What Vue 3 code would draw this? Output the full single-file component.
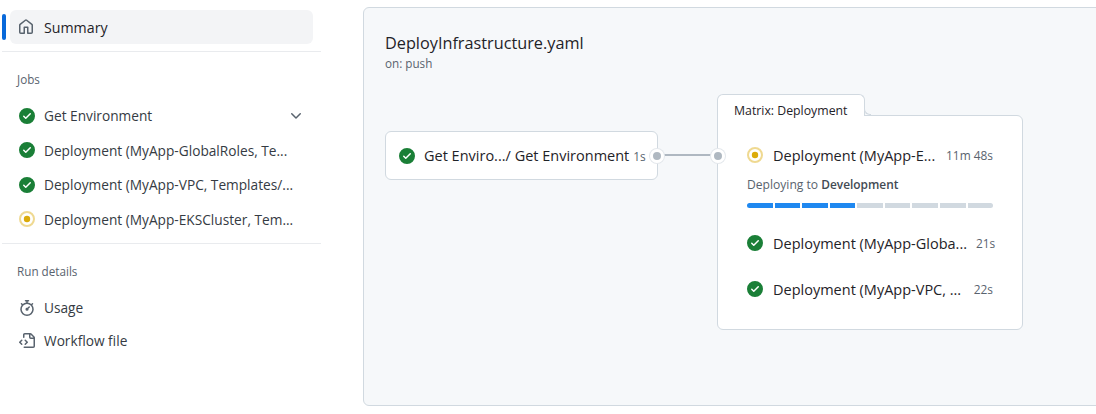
<template>
  <div class="page">
    <aside class="sidebar">
      <div class="summary-wrap">
        <span class="active-bar"></span>
        <a class="nav-item summary">
          <svg class="icon muted" viewBox="0 0 16 16"><path :d="icons.home" /></svg>
          <span class="label">Summary</span>
        </a>
      </div>
      <div class="section">
        <h2 class="section-title">Jobs</h2>
        <a v-for="job in sidebarJobs" :key="job.name" class="nav-item job">
          <svg v-if="job.status === 'success'" class="icon green" viewBox="0 0 16 16"><path :d="icons.check" /></svg>
          <svg v-else class="icon" viewBox="0 0 16 16">
            <circle cx="8" cy="8" r="7" fill="none" stroke="#dbab0a" stroke-opacity=".45" stroke-width="2" />
            <circle cx="8" cy="8" r="3.2" fill="#dbab0a" />
          </svg>
          <span class="label">{{ job.name }}</span>
          <svg v-if="job.expandable" class="icon chevron muted" viewBox="0 0 16 16"><path :d="icons.chevron" /></svg>
        </a>
      </div>
      <div class="section details">
        <h2 class="section-title">Run details</h2>
        <a class="nav-item job">
          <svg class="icon muted" viewBox="0 0 16 16"><path :d="icons.stopwatch" /></svg>
          <span class="label">Usage</span>
        </a>
        <a class="nav-item job">
          <svg class="icon muted" viewBox="0 0 16 16"><path :d="icons.file" /></svg>
          <span class="label">Workflow file</span>
        </a>
      </div>
    </aside>

    <main class="panel">
      <header class="panel-head">
        <h1 class="workflow-name">DeployInfrastructure.yaml</h1>
        <p class="trigger">on: push</p>
      </header>

      <div class="graph">
        <div class="job-card">
          <svg class="icon green" viewBox="0 0 16 16"><path :d="icons.check" /></svg>
          <span class="job-name">Get Enviro.../ Get Environment</span>
          <span class="duration">1s</span>
          <span class="port port-right"></span>
        </div>

        <div class="link"></div>

        <div class="matrix">
          <div class="matrix-tab">Matrix: Deployment</div>
          <div class="matrix-body">
            <span class="port port-left"></span>

            <div class="matrix-job running">
              <div class="matrix-row">
                <svg class="icon" viewBox="0 0 16 16">
                  <circle cx="8" cy="8" r="7" fill="none" stroke="#dbab0a" stroke-opacity=".45" stroke-width="2" />
                  <circle cx="8" cy="8" r="3.2" fill="#dbab0a" />
                </svg>
                <span class="job-name">Deployment (MyApp-E...</span>
                <span class="duration">11m 48s</span>
              </div>
              <p class="deploying">Deploying to <strong>Development</strong></p>
              <div class="progress">
                <span v-for="n in 9" :key="n" :class="['segment', { done: n <= 4 }]"></span>
              </div>
            </div>

            <div class="matrix-row finished">
              <svg class="icon green" viewBox="0 0 16 16"><path :d="icons.check" /></svg>
              <span class="job-name">Deployment (MyApp-Globa...</span>
              <span class="duration">21s</span>
            </div>
            <div class="matrix-row finished">
              <svg class="icon green" viewBox="0 0 16 16"><path :d="icons.check" /></svg>
              <span class="job-name">Deployment (MyApp-VPC, ...</span>
              <span class="duration">22s</span>
            </div>
          </div>
        </div>
      </div>
    </main>
  </div>
</template>

<script setup>
const icons = {
  home: 'M6.906.664a1.749 1.749 0 0 1 2.187 0l5.25 4.2c.415.332.657.835.657 1.367v7.019A1.75 1.75 0 0 1 13.25 15h-3.5a.75.75 0 0 1-.75-.75V9H7v5.25a.75.75 0 0 1-.75.75h-3.5A1.75 1.75 0 0 1 1 13.25V6.23c0-.531.242-1.034.657-1.366l5.25-4.2Zm1.25 1.171a.25.25 0 0 0-.312 0l-5.25 4.2a.25.25 0 0 0-.094.196v7.019c0 .138.112.25.25.25H5.5V8.25a.75.75 0 0 1 .75-.75h3.5a.75.75 0 0 1 .75.75v5.25h2.75a.25.25 0 0 0 .25-.25V6.23a.25.25 0 0 0-.094-.195Z',
  check: 'M8 16A8 8 0 1 1 8 0a8 8 0 0 1 0 16Zm3.78-9.72a.751.751 0 0 0-.018-1.042.751.751 0 0 0-1.042-.018L6.75 9.19 5.28 7.72a.751.751 0 0 0-1.042.018.751.751 0 0 0-.018 1.042l2 2a.75.75 0 0 0 1.06 0Z',
  chevron: 'M12.78 5.22a.749.749 0 0 1 0 1.06l-4.25 4.25a.749.749 0 0 1-1.06 0L3.22 6.28a.749.749 0 1 1 1.06-1.06L8 8.939l3.72-3.719a.749.749 0 0 1 1.06 0Z',
  stopwatch: 'M5.75.75A.75.75 0 0 1 6.5 0h3a.75.75 0 0 1 0 1.5h-.75v1l-.001.041a6.724 6.724 0 0 1 3.464 1.435l.007-.006.75-.75a.751.751 0 0 1 1.042.018.751.751 0 0 1 .018 1.042l-.75.75-.006.007a6.75 6.75 0 1 1-10.548 0L2.72 5.03l-.75-.75a.751.751 0 0 1 .018-1.042.751.751 0 0 1 1.042-.018l.75.75.007.006A6.72 6.72 0 0 1 7.25 2.541V1.5H6.5a.75.75 0 0 1-.75-.75ZM8 14.5a5.25 5.25 0 1 0-.001-10.501A5.25 5.25 0 0 0 8 14.5Zm.389-6.7 1.33-1.33a.75.75 0 1 1 1.061 1.06L9.45 8.861A1.503 1.503 0 0 1 8 10.75a1.499 1.499 0 1 1 .389-2.95Z',
  file: 'M4 1.75C4 .784 4.784 0 5.75 0h5.586c.464 0 .909.184 1.237.513l2.914 2.914c.329.328.513.773.513 1.237v8.586A1.75 1.75 0 0 1 14.25 15h-9a.75.75 0 0 1 0-1.5h9a.25.25 0 0 0 .25-.25V6h-2.75A1.75 1.75 0 0 1 10 4.25V1.5H5.75a.25.25 0 0 0-.25.25v2.5a.75.75 0 0 1-1.5 0Zm1.72 4.97a.75.75 0 0 1 1.06 0l2 2a.75.75 0 0 1 0 1.06l-2 2a.749.749 0 0 1-1.275-.326.749.749 0 0 1 .215-.734l1.47-1.47-1.47-1.47a.75.75 0 0 1 0-1.06ZM3.28 7.78 1.81 9.25l1.47 1.47a.751.751 0 0 1-.018 1.042.751.751 0 0 1-1.042.018l-2-2a.75.75 0 0 1 0-1.06l2-2a.751.751 0 0 1 1.042.018.751.751 0 0 1 .018 1.042Zm8.22-6.218V4.25c0 .138.112.25.25.25h2.688l-.011-.013-2.914-2.914-.013-.011Z',
}

const sidebarJobs = [
  { name: 'Get Environment', status: 'success', expandable: true },
  { name: 'Deployment (MyApp-GlobalRoles, Te...', status: 'success' },
  { name: 'Deployment (MyApp-VPC, Templates/...', status: 'success' },
  { name: 'Deployment (MyApp-EKSCluster, Tem...', status: 'running' },
]
</script>

<style>
html, body { background: #fff; overflow: hidden; }
</style>

<style scoped>
.page {
  display: flex;
  width: 1096px;
  height: 414px;
  overflow: hidden;
  font-family: "Open Sans", "Liberation Sans", sans-serif;
  font-size: 13.7px;
  color: #1f2328;
}

/* sidebar */
.sidebar {
  flex: none;
  width: 319px;
  margin-left: 2px;
}
.summary-wrap {
  display: flex;
  align-items: center;
  gap: 4px;
  padding: 10px 8px 7px 0;
  border-bottom: 1px solid #e9ebee;
}
.active-bar {
  width: 4px;
  height: 26px;
  border-radius: 3px;
  background: #0969da;
}
.nav-item {
  display: flex;
  align-items: center;
  gap: 9px;
  height: 34px;
}
.summary {
  flex: 1;
  gap: 10px;
  padding-left: 8px;
  border-radius: 6px;
  background: #f3f4f6;
}
.job {
  height: 34.5px;
  padding: 0 17px 0 17px;
}
.label {
  flex: 1;
  white-space: nowrap;
  color: #353b43;
}
.summary .label {
  font-size: 14.2px;
  color: #1f2328;
}
.icon {
  flex: none;
  width: 16px;
  height: 16px;
  fill: currentColor;
}
.muted { color: #59636e; }
.green { color: #1a7f37; }
.section {
  padding: 18px 0 6.5px;
  border-bottom: 1px solid #e9ebee;
}
.details {
  padding-top: 18px;
  border-bottom: 0;
}
.details .job { height: 33px; }
.section-title {
  margin: 0 0 10.5px 15px;
  font-size: 11.7px;
  line-height: 18px;
  font-weight: 400;
  color: #59636e;
}
.details .section-title { margin-bottom: 11px; }

/* workflow panel */
.panel {
  flex: none;
  width: 800px;
  height: 399px;
  box-sizing: border-box;
  margin: 7px 0 0 42px;
  padding: 25px 21px;
  background: #f6f8fa;
  border: 1px solid #d1d9e0;
  border-radius: 6px;
}
.workflow-name {
  margin: 0;
  font-size: 16.25px;
  line-height: 20px;
  font-weight: 400;
}
.trigger {
  margin: 1px 0 0;
  font-size: 11.7px;
  line-height: 18px;
  color: #59636e;
}
.graph {
  display: flex;
  align-items: flex-start;
  margin-top: 43px;
}
.job-card {
  position: relative;
  display: flex;
  align-items: center;
  flex: none;
  box-sizing: border-box;
  width: 273px;
  height: 49px;
  margin-top: 16px;
  padding: 0 15px 0 13px;
  background: #fff;
  border: 1px solid #d1d9e0;
  border-radius: 6px;
}
.job-card .job-name { margin-left: 9px; }
.job-card .duration { margin-left: 4px; }
.job-name {
  flex: 1;
  font-size: 14.5px;
  white-space: nowrap;
  color: #1f2328;
}
.duration {
  flex: none;
  font-size: 11.9px;
  color: #59636e;
}
.link {
  flex: none;
  width: 59px;
  height: 2px;
  margin-top: 39px;
  background: #afb8c1;
}
.port {
  position: absolute;
  z-index: 1;
  top: 50%;
  box-sizing: content-box;
  width: 8px;
  height: 8px;
  margin-top: -7px;
  border: 3px solid #fff;
  box-shadow: 0 0 0 1px #e4e8ec;
  border-radius: 50%;
  background: #afb8c1;
}
.port-right { right: -7px; }
.port-left { left: -7px; top: 39.5px; }

.matrix {
  flex: none;
  width: 306px;
  margin-top: -21px;
}
.matrix-tab {
  position: relative;
  z-index: 1;
  box-sizing: border-box;
  width: 148px;
  height: 22px;
  padding: 7px 0 0 16px;
  margin-bottom: -1px;
  font-size: 12.3px;
  line-height: 18px;
  font-weight: 400;
  background: #fff;
  border: 1px solid #d1d9e0;
  border-bottom: 0;
  border-radius: 6px 6px 0 0;
}
/* small curve where the tab runs into the box */
.matrix-tab::after {
  content: "";
  position: absolute;
  right: -7px;
  bottom: 1px;
  width: 6px;
  height: 6px;
  border-left: 1px solid #d1d9e0;
  border-bottom: 1px solid #d1d9e0;
  border-bottom-left-radius: 6px;
  background: #f6f8fa;
}
.matrix-body {
  position: relative;
  box-sizing: border-box;
  height: 215px;
  padding: 28px 29px 0;
  background: #fff;
  border: 1px solid #d1d9e0;
  border-radius: 0 6px 6px 6px;
}
.matrix-row {
  display: flex;
  align-items: center;
  gap: 10px;
  height: 22px;
}
.matrix-row .duration { margin-left: -1px; }
.deploying {
  margin: 9px 0 0;
  font-size: 12.1px;
  line-height: 18px;
  color: #59636e;
}
.deploying strong {
  font-weight: 600;
  font-size: 11.9px;
  color: #424a53;
}
.progress {
  display: flex;
  gap: 2px;
  height: 5px;
  margin-top: 9px;
  overflow: hidden;
  border-radius: 3px;
}
.segment {
  flex: 1;
  background: #d1d9e0;
}
.segment.done { background: #1f88f0; }
.finished { margin-top: 24px; }
.running + .finished { margin-top: 24px; }
</style>
